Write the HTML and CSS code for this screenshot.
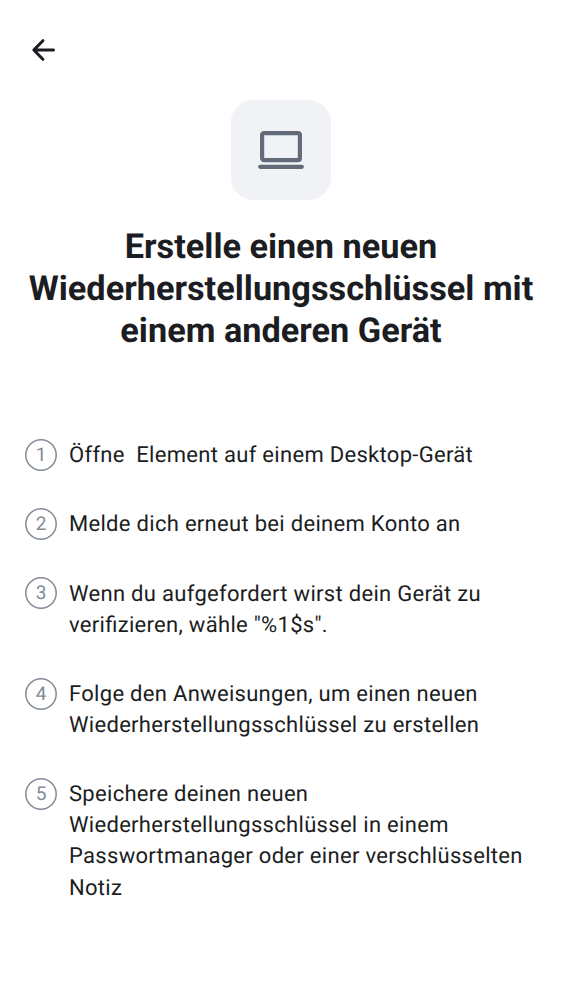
FILE: index.html
```html
<!DOCTYPE html>
<html lang="de">
<head>
<meta charset="utf-8">
<title>Wiederherstellungsschlüssel</title>
<link rel="stylesheet" href="styles.css">
</head>
<body>
<header class="topbar">
<svg class="back" viewBox="0 0 26 24" role="img" aria-label="Zurück"><path d="M22.500 12H3M11.900 2.700 2.800 12l9.100 9.300"/></svg>
</header>
<main>
<div class="tile">
<svg class="laptop" viewBox="0 0 46 40"><rect x="4.100" y="3.100" width="37.800" height="27.100" rx="2"/><path d="M2.200 36.800h41.600"/></svg>
</div>
<h1 class="title">Erstelle einen neuen<br>Wiederherstellungsschlüssel mit<br>einem anderen Gerät</h1>
<ol class="steps">
<li class="step"><span class="num"><svg class="ring" viewBox="0 0 32 32"><circle cx="16" cy="16" r="15.200"/></svg><span class="digit">1</span></span><p class="text">Öffne&nbsp; Element auf einem Desktop-Gerät</p></li>
<li class="step"><span class="num"><svg class="ring" viewBox="0 0 32 32"><circle cx="16" cy="16" r="15.200"/></svg><span class="digit">2</span></span><p class="text">Melde dich erneut bei deinem Konto an</p></li>
<li class="step"><span class="num"><svg class="ring" viewBox="0 0 32 32"><circle cx="16" cy="16" r="15.200"/></svg><span class="digit">3</span></span><p class="text">Wenn du aufgefordert wirst dein Gerät zu<br>verifizieren, wähle "%1$s".</p></li>
<li class="step"><span class="num"><svg class="ring" viewBox="0 0 32 32"><circle cx="16" cy="16" r="15.200"/></svg><span class="digit">4</span></span><p class="text">Folge den Anweisungen, um einen neuen<br>Wiederherstellungsschlüssel zu erstellen</p></li>
<li class="step"><span class="num"><svg class="ring" viewBox="0 0 32 32"><circle cx="16" cy="16" r="15.200"/></svg><span class="digit">5</span></span><p class="text">Speichere deinen neuen<br>Wiederherstellungsschlüssel in einem<br>Passwortmanager oder einer verschlüsselten<br>Notiz</p></li>
</ol>
</main>
</body>
</html>
```
FILE: styles.css
```css
body { margin: 0; background: #fff; color: #1b1d22; font-family: Roboto, sans-serif; text-rendering: geometricPrecision; }
.topbar { height: 100px; padding: 38px 0 0 31px; box-sizing: border-box; }
.back { display: block; width: 26px; height: 24px; fill: none; stroke: #1b1d22; stroke-width: 3; stroke-linecap: round; stroke-linejoin: round; }
.tile { width: 100px; height: 100px; margin: 0 auto; border-radius: 22px; background: #f0f2f5; display: flex; align-items: center; justify-content: center; }
.laptop { width: 46px; height: 40px; fill: none; stroke: #626b77; stroke-width: 4.200; stroke-linecap: round; }
.title { margin: 26px 0 0; text-align: center; font-size: 34.300px; line-height: 42px; font-weight: 700; white-space: nowrap; }
.steps { list-style: none; margin: 87px 0 0; padding: 0 0 0 25px; display: grid; gap: 38.100px; }
.step { display: flex; align-items: flex-start; gap: 12px; }
.num { display: grid; width: 32px; height: 32px; margin-bottom: -1px; flex: none; }
.ring, .digit { grid-area: 1 / 1; }
.ring { width: 32px; height: 32px; fill: none; stroke: #818a95; stroke-width: 1.500; }
.digit { color: #818a95; font-size: 19px; line-height: 31px; text-align: center; }
.text { margin: 1.300px 0 -1.300px; font-size: 22px; line-height: 31.100px; letter-spacing: 0.300px; font-feature-settings: "liga" 1; white-space: nowrap; }
```
